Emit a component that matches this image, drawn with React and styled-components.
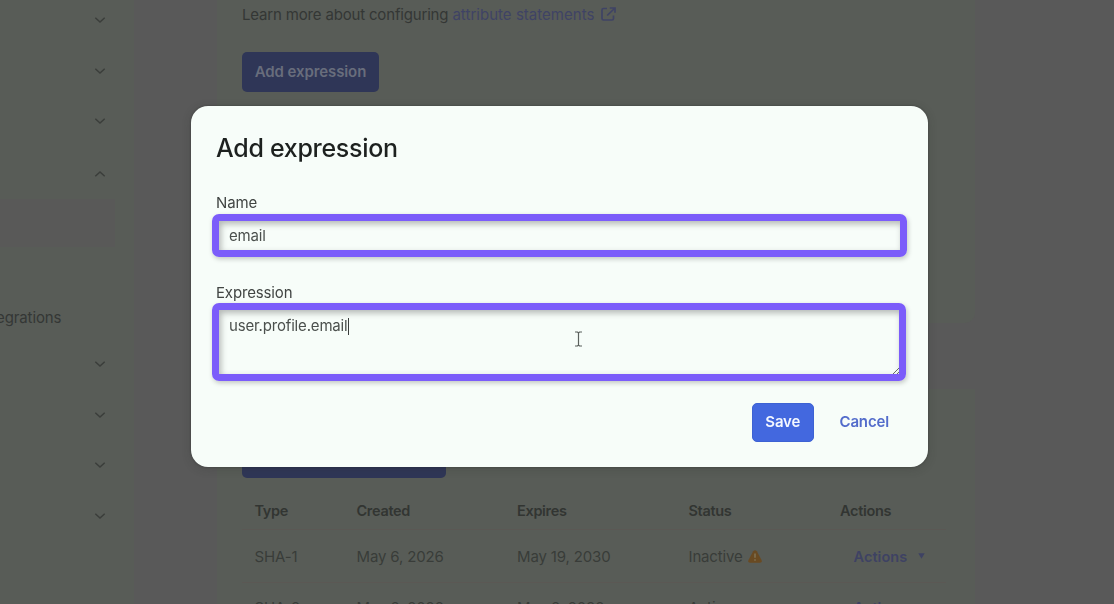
import React from 'react';
import styled, { createGlobalStyle } from 'styled-components';

const GlobalStyle = createGlobalStyle`
  * {
    box-sizing: border-box;
  }

  body {
    margin: 0;
    overflow: hidden;
    font-family: Inter, 'Liberation Sans', sans-serif;
    font-size: 15px;
    color: #343735;
  }
`;

const Page = styled.div`
  display: flex;
  width: 1114px;
  height: 604px;
  overflow: hidden;
  background: #595959;
`;

const Sidebar = styled.nav`
  display: flex;
  flex-direction: column;
  flex: none;
  width: 134px;
  height: 604px;
  padding-top: 1px;
  background: #585c57;
`;

const NavGroup = styled.div`
  display: flex;
  align-items: center;
  justify-content: flex-end;
  height: ${props => props.height || 50.6}px;
  padding-right: 28px;
  color: #3b3e3b;
`;

const NavSelected = styled.div`
  width: 115px;
  height: 48px;
  margin-top: -8px;
  background: #595958;
`;

const NavItem = styled.div`
  display: flex;
  align-items: center;
  height: 44px;
  margin-top: 48px;
  margin-left: -4px;
  letter-spacing: -0.1px;
  color: #343735;
`;

const Main = styled.main`
  display: flex;
  flex-direction: column;
  gap: 66px;
  width: 758px;
  margin-left: 83px;
`;

const Card = styled.section`
  flex: none;
  height: ${props => props.height}px;
  padding: ${props => props.padding};
  border-radius: 0 0 10px 10px;
  background: #585c57;
`;

const HelpText = styled.p`
  display: flex;
  align-items: center;
  height: 20px;
  margin: 0 0 28px;
  white-space: pre;
  letter-spacing: -0.17px;
`;

const HelpLink = styled.a`
  display: flex;
  align-items: center;
  gap: 7px;
  letter-spacing: 0.03px;
  color: #3f4365;
`;

const DimButton = styled.button`
  display: block;
  width: ${props => props.width}px;
  height: 40px;
  padding: 0 0 2px;
  border: 0;
  border-radius: 5px;
  background: #2f3657;
  color: #686d7c;
  font: 600 15px Inter, sans-serif;
  letter-spacing: -0.1px;
`;

const Table = styled.div`
  margin-top: 14px;
  width: 704px;
`;

const Row = styled.div`
  display: grid;
  grid-template-columns: 102px 160.5px 171.5px 151.5px 1fr;
  align-items: center;
  height: ${props => (props.head ? 38 : 53)}px;
  padding-left: 12.5px;
  border-bottom: 1px solid #5b5854;
  font-weight: ${props => (props.head ? 600 : 400)};
  font-size: ${props => (props.head ? 14.5 : 15)}px;
  letter-spacing: ${props => (props.head ? -0.32 : -0.15)}px;
  color: ${props => (props.head ? '#323532' : '#393c39')};

  &:last-child {
    padding-bottom: 3px;
  }
`;

const Status = styled.span`
  display: flex;
  align-items: center;
  gap: 5px;
`;

const ActionsButton = styled.button`
  display: flex;
  align-items: center;
  gap: 11px;
  margin-left: 13.5px;
  padding: 0;
  border: 0;
  background: none;
  color: #3e4263;
  font: 600 14.5px Inter, sans-serif;
  letter-spacing: 0.05px;
`;

const Overlay = styled.div`
  position: fixed;
  inset: 0;
  display: flex;
  align-items: flex-start;
  padding: 106px 0 0 191px;
`;

const Dialog = styled.div`
  width: 737px;
  height: 361px;
  padding: 26px 21px 0;
  border-radius: 17px;
  background: #f7fdf9;
  box-shadow: 0 0 2px rgba(20, 20, 20, 0.4), 0 2px 10px rgba(40, 45, 40, 0.22);
`;

const DialogTitle = styled.h2`
  height: 32px;
  margin: 0 0 0 4px;
  font-size: 25px;
  line-height: 32px;
  font-weight: 500;
  letter-spacing: -0.3px;
  color: #1d211f;
`;

const Label = styled.label`
  display: block;
  height: 20px;
  margin: ${props => props.margin};
  line-height: 20px;
  letter-spacing: -0.15px;
  color: #414543;
`;

const Field = styled.div`
  display: flex;
  align-items: flex-start;
  justify-content: space-between;
  width: ${props => props.width}px;
  height: ${props => props.height}px;
  padding: ${props => props.top || 6}px 0 0 10px;
  border: 7px solid #7b5cfa;
  border-radius: 7px;
  line-height: 18px;
  color: #4b504d;
  box-shadow: 1px 2px 5px rgba(0, 0, 0, 0.22),
    inset 2px 3px 6px rgba(0, 0, 0, 0.28);
`;

const Value = styled.span`
  display: flex;
  align-items: center;
  letter-spacing: -0.17px;
`;

const Caret = styled.i`
  width: 1px;
  height: 17px;
  background: #3a3e3c;
`;

const ResizeGrip = styled.svg`
  align-self: flex-end;
`;

const Pointer = styled.svg`
  position: absolute;
  left: 574px;
  top: 331px;
`;

const DialogActions = styled.div`
  display: flex;
  align-items: center;
  gap: 26px;
  margin: 22px 0 0 540px;
`;

const SaveButton = styled.button`
  width: 61.5px;
  height: 39px;
  padding: 0 0 2px;
  border: 1px solid #3d62d3;
  border-radius: 5px;
  background: #4368df;
  color: #f3f7ff;
  font: 600 15px Inter, sans-serif;
  letter-spacing: -0.15px;
`;

const CancelButton = styled.button`
  padding: 0 0 2px;
  border: 0;
  background: none;
  color: #536ccb;
  font: 600 15px Inter, sans-serif;
  letter-spacing: -0.15px;
`;

const Chevron = ({ up }) => (
  <svg width="12" height="8" viewBox="0 0 12 8" fill="none">
    <path
      d={up ? 'M1.3 6.3L6 2L10.7 6.3' : 'M1.3 1.7L6 6L10.7 1.7'}
      stroke="currentColor"
      strokeWidth="1.5"
    />
  </svg>
);

const ExternalIcon = () => (
  <svg width="15" height="14" viewBox="0 0 15 14" fill="none">
    <path
      d="M6 1.5H2.5Q1 1.5 1 3V11.5Q1 13 2.5 13H11Q12.5 13 12.5 11.5V8.5M8.8 1H14V5.8M14 1L6.2 8.5"
      stroke="currentColor"
      strokeWidth="1.7"
    />
  </svg>
);

const WarningIcon = () => (
  <svg width="14" height="13" viewBox="0 0 14 13">
    <path
      d="M5.2 1.3Q7-1 8.8 1.3L13.5 10Q14.4 12.6 12 12.8H2Q-.4 12.6.5 10Z"
      fill="#694a22"
    />
    <path d="M7 3.6V7.8M7 9.2V10.8" stroke="#807658" strokeWidth="1.4" />
  </svg>
);

const DownArrow = () => (
  <svg width="7" height="6" viewBox="0 0 7 6">
    <path d="M.3 .3H6.7L3.5 5.7Z" fill="currentColor" />
  </svg>
);

const certificates = [
  { type: 'SHA-1', created: 'May 6, 2026', expires: 'May 19, 2030', status: 'Inactive', warning: true },
  { type: 'SHA-2', created: 'May 6, 2026', expires: 'May 6, 2036', status: 'Active' }
];

const App = () => (
  <>
    <GlobalStyle />
    <Page>
      <Sidebar>
        <NavGroup height={38}><Chevron /></NavGroup>
        <NavGroup height={63}><Chevron /></NavGroup>
        <NavGroup height={38}><Chevron /></NavGroup>
        <NavGroup height={67}><Chevron up /></NavGroup>
        <NavSelected />
        <NavItem>egrations</NavItem>
        <NavGroup><Chevron /></NavGroup>
        <NavGroup><Chevron /></NavGroup>
        <NavGroup><Chevron /></NavGroup>
        <NavGroup><Chevron /></NavGroup>
      </Sidebar>
      <Main>
        <Card height={323} padding="4px 25px 0">
          <HelpText>
            Learn more about configuring{' '}
            <HelpLink>
              attribute statements
              <ExternalIcon />
            </HelpLink>
          </HelpText>
          <DimButton width={137}>Add expression</DimButton>
        </Card>
        <Card height={240} padding="49px 25px 0">
          <DimButton width={204} />
          <Table>
            <Row head>
              <span>Type</span>
              <span>Created</span>
              <span>Expires</span>
              <span>Status</span>
              <span>Actions</span>
            </Row>
            {certificates.map(cert => (
              <Row key={cert.type}>
                <span>{cert.type}</span>
                <span>{cert.created}</span>
                <span>{cert.expires}</span>
                <Status>
                  {cert.status}
                  {cert.warning && <WarningIcon />}
                </Status>
                <ActionsButton>
                  Actions
                  <DownArrow />
                </ActionsButton>
              </Row>
            ))}
          </Table>
        </Card>
      </Main>
    </Page>
    <Overlay>
      <Dialog>
        <DialogTitle>Add expression</DialogTitle>
        <Label margin="29px 0 1px 4px">Name</Label>
        <Field width={695} height={43}>
          <Value>email</Value>
        </Field>
        <Label margin="26px 0 0 4px">Expression</Label>
        <Field width={694} height={78} top={7}>
          <Value>
            user.profile.email
            <Caret />
          </Value>
          <ResizeGrip width="7" height="7" viewBox="0 0 7 7">
            <path d="M1 7L7 1M5 7L7 5" stroke="#666b67" />
          </ResizeGrip>
        </Field>
        <DialogActions>
          <SaveButton>Save</SaveButton>
          <CancelButton>Cancel</CancelButton>
        </DialogActions>
      </Dialog>
      <Pointer width="9" height="16" viewBox="0 0 9 16" fill="none">
        <path d="M1 1H3.5L4.5 2L5.5 1H8M4.5 2V14M1 15H3.5L4.5 14L5.5 15H8" stroke="#5b605d" strokeWidth="1.2" />
      </Pointer>
    </Overlay>
  </>
);

export default App;
